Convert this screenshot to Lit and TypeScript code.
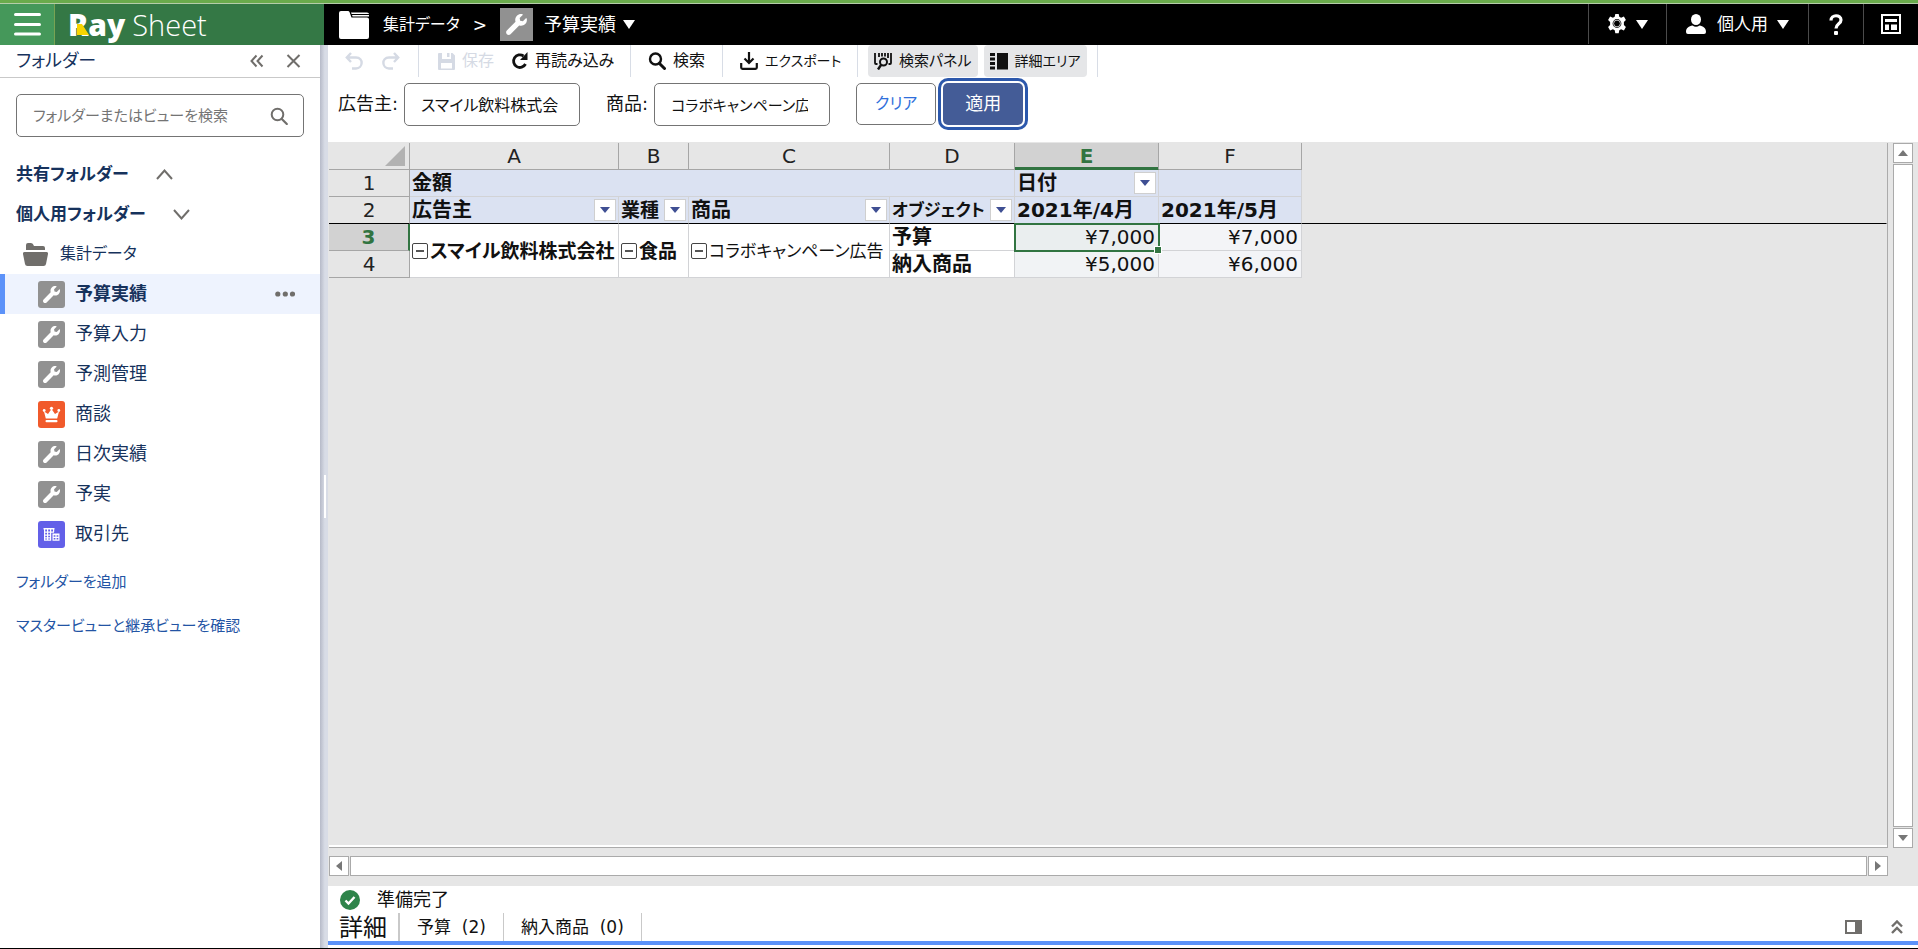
import { LitElement, html, css, svg, nothing } from "lit";
import { customElement, state } from "lit/decorators.js";
import { classMap } from "lit/directives/class-map.js";

const wrench = svg`<svg viewBox="-150 -150 812 812" aria-hidden="true"><path fill="#fff" d="M507.730 109.100c-2.240-9.030-13.540-12.090-20.120-5.510l-74.360 74.360-67.880-11.310-11.310-67.880 74.360-74.360c6.620-6.620 3.430-17.900-5.660-20.160-47.380-11.740-99.550.91-136.580 37.930-39.640 39.640-50.550 97.100-34.050 147.200L18.740 402.760c-24.990 24.990-24.990 65.510 0 90.500 24.990 24.990 65.510 24.990 90.500 0l213.210-213.210c50.120 16.710 107.470 5.680 147.370-34.220 37.070-37.070 49.700-89.320 37.910-136.730z"/></svg>`;
const crown = svg`<svg viewBox="0 0 27 27" aria-hidden="true" fill="#fff"><path d="M6 10.500 7.800 17.500h11.400l1.800-7-4 2.400-3.500-5-3.500 5z"/><circle cx="6.200" cy="9.500" r="1.400"/><circle cx="13.500" cy="7.300" r="1.600"/><circle cx="20.800" cy="9.500" r="1.400"/><rect x="7.500" y="18.900" width="12" height="2.300" rx="1"/></svg>`;
const building = svg`<svg viewBox="0 0 27 27" aria-hidden="true" fill="#fff"><path d="M5.500 7h11v1.500h-11zM6 7h1.200v12.500H6zM9 7h1.200v12.500H9zM12 7h1.200v12.500H12zM15 7h1.200v4H15zM6 10.500h10v1.200H6zM6 13.500h7v1.200H6zM6 16.300h7v1.200H6zM6 18.500h7.200v1.200H6z"/><path fill-rule="evenodd" d="M14.500 12.500h7v7.200h-7zM15.700 14.200v1.600h1.700v-1.600zM18.600 14.200v1.600h1.700v-1.600zM15.700 17v1.600h1.700V17zM18.600 17v1.600h1.700V17z"/></svg>`;
const caret = svg`<svg class="caret" viewBox="0 0 12 9" aria-hidden="true"><path d="M0 0h12L6 9z" fill="currentColor"/></svg>`;

type View = { name: string; kind: string; };

@customElement("app-root")
export class AppRoot extends LitElement {
  static styles = css`
    :host { display: flex; flex-direction: column; min-height: 100vh; box-sizing: border-box; border-top: 3px solid #6aab4c; border-bottom: 1px solid #000; background: #fff; color: #111; font: 17px/24px "DejaVu Sans", "Noto Sans CJK JP", sans-serif; font-feature-settings: "palt"; }
    * { box-sizing: border-box; }
    button, input { font: inherit; font-feature-settings: inherit; color: inherit; }
    button { display: flex; align-items: center; justify-content: center; flex: none; margin: 0; padding: 0; border: 0; background: none; white-space: nowrap; }
    svg { display: block; flex: none; }
    a { text-decoration: none; }
    .caret { width: 12px; height: 9px; }
    .tile { display: block; flex: none; width: 27px; height: 27px; border-radius: 3px; background: #919191; }
    .tile.deal { background: #f15a2b; }
    .tile.account { background: #6360e8; }

    .topbar { display: flex; height: 42px; border-top: 1px solid #b5cda9; background: #000; color: #fff; }
    .brand { display: flex; width: 324px; background: #347845; }
    .menu { width: 55px; border-right: 1px solid #78a353; background: #45985a; }
    .logo { position: relative; display: flex; align-items: center; margin-left: 13px; }
    .logo b { font: 800 30px/40px "Open Sans", sans-serif; }
    .logo span { margin-left: 7px; font: 300 29px/40px "Open Sans", sans-serif; }
    .leg { position: absolute; left: 9px; top: 19px; width: 13px; height: 13px; }
    .crumbs { display: flex; flex: 1; align-items: center; padding-left: 15px; }
    .crumbs .where { margin-left: 14px; font-size: 16px; }
    .crumbs .gt { margin: 0 13px; }
    .crumbs .tile { width: 33px; height: 33px; border-radius: 0; }
    .crumbs button { gap: 7px; margin-left: 11px; font-size: 18px; }
    .tools { display: flex; height: 40px; }
    .tools button { gap: 9px; border-left: 1px solid #4b4b4b; }
    .t1 { width: 78px; } .t2 { width: 142px; } .t3 { width: 55px; } .t4 { width: 55px; }
    .t2 svg:first-child { margin-right: 2px; }

    .body { display: flex; flex: 1; min-height: 0; }
    .side { width: 320px; flex: none; color: #16325c; }
    .sidehead { display: flex; align-items: center; height: 33px; padding: 0 19px 0 16px; border-bottom: 1px solid #c9c9c9; }
    .sidehead h2 { flex: 1; margin: 0; font-size: 18px; font-weight: 400; }
    .sidehead button { margin-left: 22px; color: #706e6b; }
    .find { display: flex; align-items: center; height: 43px; margin: 16px 16px 17px; padding: 0 15px 0 16px; border: 1px solid #747474; border-radius: 5px; color: #706e6b; font-size: 15px; }
    .find input { flex: 1; min-width: 0; border: 0; outline: 0; padding: 0; background: none; }
    .find input::placeholder { color: #747474; opacity: 1; }
    .group { gap: 27px; height: 40px; margin-left: 16px; font-weight: 700; color: #16325c; }
    .tree { list-style: none; margin: 0; padding: 0; }
    .folder { gap: 12px; height: 40px; margin-left: 23px; font-size: 16px; color: #16325c; }
    .row { display: flex; align-items: center; height: 40px; padding: 0 25px 0 38px; }
    .row a { display: flex; flex: 1; align-items: center; gap: 10px; color: #16325c; font-size: 18px; }
    .row.on { padding-left: 33px; border-left: 5px solid #5c92f9; background: #eef3fe; font-weight: 700; }
    .side .links { display: flex; flex-direction: column; gap: 20px; margin: 16px; }
    .links a { color: #2354a4; font-size: 15px; }
    .split { display: flex; align-items: center; justify-content: center; width: 8px; flex: none; background: linear-gradient(90deg, #b6bac8, #d8dce6 60%); }
    .split i { width: 2px; height: 43px; background: #fff; margin-left: 2px; }
    .main { display: flex; flex: 1; flex-direction: column; min-width: 0; }

    .toolbar { display: flex; height: 32px; font-size: 16px; }
    .toolbar > div { display: flex; border-right: 1px solid #d8dde6; }
    .toolbar button { gap: 7px; }
    .toolbar button:disabled { color: #d5dae4; }
    .g1 { width: 91px; padding-left: 17px; gap: 19px; }
    .g2 { width: 212px; padding-left: 19px; gap: 17px; }
    .g3 { width: 92px; padding-left: 17px; }
    .g4 { width: 135px; padding-left: 17px; font-size: 14px; }
    .g5 { padding: 0 10px; gap: 6px; font-size: 15px; }
    .toolbar .g5 button { padding: 0 6px; border-radius: 4px; background: #e5e6e8; }
    .toolbar .g5 button + button { font-size: 14px; }
    .filters { display: flex; align-items: center; height: 54px; margin-bottom: 11px; padding-left: 10px; font-size: 18px; }
    .filters label { display: flex; align-items: center; gap: 6px; margin-right: 26px; }
    .filters input { width: 176px; height: 43px; padding: 0 21px 0 16px; border: 1px solid #747474; border-radius: 5px; background: #fff; font-size: 16px; }
    .filters .item { font-size: 15px; }
    .filters button { width: 80px; height: 42px; border-radius: 5px; }
    .filters .clear { border: 1px solid #747474; color: #2f6fdb; font-size: 16px; }
    .filters .apply { margin-left: 7px; background: #445c97; color: #fff; box-shadow: 0 0 0 2px #fff, 0 0 0 5px #2c58ac; }

    .sheet { display: grid; flex: 1; grid-template-columns: minmax(0, 1fr) 20px; grid-template-rows: minmax(0, 1fr) 20px; column-gap: 5px; row-gap: 8px; padding: 1px 5px 10px 1px; background: #e6e6e6; }
    .canvas { border-right: 1px solid #ababab; border-bottom: 1px solid #ababab; box-shadow: inset 0 -2px #fff; }
    table { width: 100%; border-collapse: separate; border-spacing: 0; table-layout: fixed; font-size: 20px; line-height: 26px; }
    th, td { height: 27px; padding: 0 2px; border-right: 1px solid #d2d3d6; border-bottom: 1px solid #d2d3d6; text-align: left; white-space: nowrap; font-weight: 400; background: #fff; }
    .cols th, th.num { text-align: center; background: #e6e6e6; border-color: #a6a6a6; color: #222; }
    .cols th:first-child svg { margin: 0 2px 0 auto; }
    .cols th.hot { background: #d2d2d2; color: #317441; font-weight: 700; box-shadow: inset 0 -2px #317441; border-bottom-color: #317441; }
    th.num.hot { background: #d2d2d2; color: #317441; font-weight: 700; border-right: 2px solid #317441; }
    .head td { background: #dbe2f2; font-weight: 700; }
    tr td.rest { border-color: transparent; background: none; }
    tr.rule td, tr.rule th { border-bottom-color: #000; }
    .stub { display: flex; align-items: center; justify-content: space-between; }
    .stub button { width: 22px; height: 22px; border: 1px solid #cfcfcf; background: #fff; }
    td.strong { font-weight: 700; }
    .small { font-size: 17px; }
    .medium { font-size: 19px; }
    .expand { display: flex; align-items: center; gap: 2px; }
    .expand button { width: 16px; height: 16px; border: 1px solid #444; border-radius: 2px; }
    .expand button::before { content: ""; width: 8px; height: 2px; background: #555; }
    td.money { text-align: right; background: #f3f4f7; padding-right: 3px; }
    td.sel { position: relative; background: #eaeeef; outline: 2px solid #317441; outline-offset: -1px; }
    td.sel::after { content: ""; position: absolute; right: -3px; bottom: -3px; width: 6px; height: 6px; background: #317441; outline: 1px solid #fff; }
    td.tint { background: #f1f3f5; }
    .bar { display: flex; gap: 1px; color: #777; }
    .bar.v { flex-direction: column; }
    .bar button { width: 20px; height: 20px; border: 1px solid #aaa; background: #fff; }
    .bar i { flex: 1; border: 1px solid #aaa; background: #fff; }

    .status { display: flex; align-items: center; gap: 17px; height: 27px; padding-left: 12px; font-size: 18px; }
    .tabs { display: flex; height: 28px; }
    .tabs strong { padding: 0 11px; border-right: 2px solid #c9c9c9; font-size: 24px; font-weight: 400; line-height: 30px; }
    .tabs .tab { padding: 0 17px; border-right: 1px solid #c9c9c9; white-space: pre; }
    .tabs .end { display: flex; gap: 29px; margin: 0 15px 0 auto; color: #706e6b; }
    .foot { height: 7px; border-top: 4px solid #5c92f9; background: #fff; }
  `;

  @state() private views: View[] = [
    { name: "予算実績", kind: "tool" },
    { name: "予算入力", kind: "tool" },
    { name: "予測管理", kind: "tool" },
    { name: "商談", kind: "deal" },
    { name: "日次実績", kind: "tool" },
    { name: "予実", kind: "tool" },
    { name: "取引先", kind: "account" },
  ];
  @state() private current = "予算実績";

  private tile(kind: string) {
    const glyph = kind === "deal" ? crown : kind === "account" ? building : wrench;
    return html`<span class=${classMap({ tile: true, [kind]: true })}>${glyph}</span>`;
  }

  private filterCell(text: string, size = "") {
    return html`<div class="stub"><span class=${size}>${text}</span><button aria-label=${text + " フィルター"}><svg width="10" height="6" viewBox="0 0 10 6"><path d="M0 0h10L5 6z" fill="#3f4f93"/></svg></button></div>`;
  }

  private group(text: string, size = "") {
    return html`<div class="expand"><button aria-label=${text + " を折りたたむ"}></button><span class=${size}>${text}</span></div>`;
  }

  private header() {
    return html`<header class="topbar">
      <div class="brand">
        <button class="menu" aria-label="メニュー"><svg width="27" height="23" viewBox="0 0 27 23" stroke="#fff" stroke-width="3" stroke-linecap="round"><path d="M1.500 1.500h24M1.500 11.500h24M1.500 21h24"/></svg></button>
        <div class="logo"><b>Ray</b><span>Sheet</span><svg class="leg" viewBox="0 0 13 13"><path d="M0 1h5l7 11H0z" fill="#f8d500"/></svg></div>
      </div>
      <nav class="crumbs">
        <svg width="30" height="28" viewBox="0 0 30 28"><path d="M2 0h7q1 0 1.500 1l2 5.500H28a2 2 0 0 1 2 2V26a2 2 0 0 1-2 2H2a2 2 0 0 1-2-2V2a2 2 0 0 1 2-2zM12 1.500h16q2 0 2 1.500H12.600zM13 4h17v1.500H13.600z" fill="#fff"/></svg>
        <span class="where">集計データ</span><span class="gt">&gt;</span>${this.tile("tool")}
        <button>${this.current}${caret}</button>
      </nav>
      <div class="tools">
        <button class="t1" aria-label="設定"><svg width="20" height="20" viewBox="0 0 20 20"><path fill="#fff" fill-rule="evenodd" d="M8.300 0h3.400l.6 2.800 1.800 1 2.800-1.200 2 3.400-2 2v3l2 2-2 3.400-2.800-1.200-1.800 1-.6 3H8.300l-.6-3-1.800-1-2.800 1.200-2-3.400 2-2V8l-2-2 2-3.400 2.800 1.200 1.800-1zM10 5.100a4.400 4.400 0 1 0 0 8.800A4.400 4.400 0 0 0 10 5.100z"/><circle cx="10" cy="9.500" r="3.400" fill="none" stroke="#fff" stroke-width=".8"/></svg>${caret}</button>
        <button class="t2"><svg width="20" height="20" viewBox="0 0 20 20" fill="#fff"><ellipse cx="10" cy="5.500" rx="5" ry="5.500"/><path d="M0 18c0-4 3-6 6.500-6.500a6 6 0 0 0 7 0C17 12 20 14 20 18q0 2-2 2H2q-2 0-2-2z"/></svg>個人用${caret}</button>
        <button class="t3" aria-label="ヘルプ"><svg width="14" height="21" viewBox="0 0 14 21"><path d="M2 6.500C2 0 12 0.500 12 6c0 4-5 3.500-5 8.500" fill="none" stroke="#fff" stroke-width="3.200"/><rect x="5" y="17" width="4" height="4" rx="1" fill="#fff"/></svg></button>
        <button class="t4" aria-label="レイアウト"><svg width="20" height="20" viewBox="0 0 20 20"><rect x="1" y="1" width="18" height="18" fill="none" stroke="#fff" stroke-width="2"/><path d="M4 5h12v3H4zM4 10.500h4V16H4zM10 10.500h6V16h-6z" fill="#fff"/></svg></button>
      </div>
    </header>`;
  }

  private sidebar() {
    return html`<aside class="side">
      <div class="sidehead"><h2>フォルダー</h2>
        <button aria-label="折りたたむ"><svg width="14" height="14" viewBox="0 0 14 14" fill="none" stroke="currentColor" stroke-width="2"><path d="M6.500 1.500 1.500 7l5 5.500M12.500 1.500 7.500 7l5 5.500"/></svg></button>
        <button aria-label="閉じる"><svg width="15" height="14" viewBox="0 0 15 14" stroke="currentColor" stroke-width="2"><path d="m1.500 1 12 12M13.500 1l-12 12"/></svg></button></div>
      <label class="find"><input type="text" placeholder="フォルダーまたはビューを検索" aria-label="フォルダーまたはビューを検索"><svg width="18" height="18" viewBox="0 0 18 18" fill="none" stroke="currentColor"><circle cx="7.500" cy="7.500" r="5.800" stroke-width="2"/><path d="m11.800 12 5 5" stroke-width="2.200" stroke-linecap="round"/></svg></label>
      <button class="group">共有フォルダー<svg width="17" height="11" viewBox="0 0 17 11" fill="none" stroke="#706e6b" stroke-width="2"><path d="m1 10 7.500-8.500L16 10"/></svg></button>
      <button class="group">個人用フォルダー<svg width="17" height="11" viewBox="0 0 17 11" fill="none" stroke="#706e6b" stroke-width="2"><path d="m1 1 7.500 8.500L16 1"/></svg></button>
      <button class="folder"><svg width="25" height="23" viewBox="0 0 25 23" fill="#706e6b"><path d="M3 7V2q0-2 2-2h3q2 0 3 3h9q2 0 2 2v2z"/><path d="M1.500 9h22q1.700 0 1.500 2l-2 10q-.3 2-2.500 2h-16q-2.200 0-2.500-2L0 11q-.2-2 1.500-2z"/></svg>集計データ</button>
      <ul class="tree">${this.views.map((v) => html`<li class=${classMap({ row: true, on: v.name === this.current })}>
        <a href="#" @click=${(e: Event) => { e.preventDefault(); this.current = v.name; }}>${this.tile(v.kind)}${v.name}</a>
        ${v.name === this.current ? html`<button aria-label="その他"><svg width="20" height="6" viewBox="0 0 20 6" fill="#706e6b"><circle cx="2.800" cy="3" r="2.600"/><circle cx="10.300" cy="3" r="2.600"/><circle cx="17.500" cy="3" r="2.600"/></svg></button>` : nothing}</li>`)}</ul>
      <div class="links"><a href="#">フォルダーを追加</a><a href="#">マスタービューと継承ビューを確認</a></div>
    </aside>`;
  }

  private toolbar() {
    return html`<div class="toolbar">
      <div class="g1"><button disabled aria-label="元に戻す"><svg width="18" height="18" viewBox="0 0 18 18" fill="none" stroke="currentColor" stroke-width="2.400"><path d="M6 1 1.800 5.500 6 10M2 5.500h9c8 0 7 11 0 11H7"/></svg></button>
        <button disabled aria-label="やり直し"><svg width="18" height="18" viewBox="0 0 18 18" fill="none" stroke="currentColor" stroke-width="2.400"><path d="M12 1l4.200 4.500L12 10M16 5.500H7c-8 0-7 11 0 11h4"/></svg></button></div>
      <div class="g2"><button disabled><svg width="17" height="17" viewBox="0 0 17 17" fill="currentColor" fill-rule="evenodd"><path d="M1 0h3v6h9V0h1.500L17 2.500V16q0 1-1 1H1q-1 0-1-1V1q0-1 1-1zM3 10v5.500h11V10z"/><path d="M9 0h2.500v4H9z"/></svg>保存</button>
        <button><svg width="17" height="18" viewBox="0 0 17 18"><path d="M14.500 12A6.300 6.300 0 1 1 12.500 4" fill="none" stroke="currentColor" stroke-width="2.800"/><path d="M16.500 0v8H9z" fill="currentColor"/></svg>再読み込み</button></div>
      <div class="g3"><button><svg width="18" height="18" viewBox="0 0 18 18" fill="none" stroke="currentColor"><circle cx="7.500" cy="7" r="5.500" stroke-width="2.400"/><path d="m11.500 11.500 5 5" stroke-width="3" stroke-linecap="round"/></svg>検索</button></div>
      <div class="g4"><button><svg width="18" height="18" viewBox="0 0 18 18" fill="none" stroke="currentColor" stroke-width="2.200"><path d="M9 0v10M4.500 6.500 9 11l4.500-4.500M1.200 11v4.500q0 1.300 1.300 1.300h13q1.300 0 1.300-1.300V11"/></svg>エクスポート</button></div>
      <div class="g5"><button><svg width="18" height="17" viewBox="0 0 18 17" fill="none" stroke="currentColor" stroke-width="1.800"><path d="M1 0v10q0 1 1 1h1.500M5 0v4M8 0v3.500M11 0v3.500M14 0v5M17 0v10q0 1-1 1h-1.500"/><circle cx="9.500" cy="9" r="3.500" stroke-width="2"/><path d="m7 12-3 4.500" stroke-width="2.400"/></svg>検索パネル</button>
        <button><svg width="18" height="17" viewBox="0 0 18 17" fill="currentColor"><path d="M0 0h5v3H0zM0 4.500h5v3H0zM0 9h5v3H0zM0 13.500h5v3H0zM7 0h11v16.500H7z"/></svg>詳細エリア</button></div>
    </div>`;
  }

  private table() {
    const rest = html`<td class="rest"></td>`;
    return html`<table>
      <colgroup><col style="width:81px"><col style="width:209px"><col style="width:70px"><col style="width:201px"><col style="width:125px"><col style="width:144px"><col style="width:143px"><col></colgroup>
      <thead><tr class="cols"><th><svg width="20" height="20" viewBox="0 0 20 20"><path d="M20 0v20H0z" fill="#b2b2b2"/></svg></th>${["A", "B", "C", "D", "E", "F"].map((c) => html`<th class=${classMap({ hot: c === "E" })}>${c}</th>`)}${rest}</tr></thead>
      <tbody>
        <tr class="head"><th class="num">1</th><td colspan="4">金額</td><td>${this.filterCell("日付")}</td><td></td>${rest}</tr>
        <tr class="head rule"><th class="num">2</th><td>${this.filterCell("広告主")}</td><td>${this.filterCell("業種", "medium")}</td><td>${this.filterCell("商品")}</td><td>${this.filterCell("オブジェクト", "small")}</td><td>2021年/4月</td><td>2021年/5月</td>${rest}</tr>
        <tr><th class="num hot">3</th><td class="strong" rowspan="2">${this.group("スマイル飲料株式会社", "medium")}</td><td class="strong" rowspan="2">${this.group("食品", "medium")}</td><td rowspan="2">${this.group("コラボキャンペーン広告", "small")}</td><td class="strong">予算</td><td class="money sel">¥7,000</td><td class="money">¥7,000</td>${rest}</tr>
        <tr><th class="num">4</th><td class="strong">納入商品</td><td class="money tint">¥5,000</td><td class="money">¥6,000</td>${rest}</tr>
      </tbody></table>`;
  }

  render() {
    return html`${this.header()}
      <div class="body">${this.sidebar()}<div class="split"><i></i></div>
        <main class="main">${this.toolbar()}
          <form class="filters" @submit=${(e: Event) => e.preventDefault()}>
            <label>広告主:<input type="text" value="スマイル飲料株式会社"></label>
            <label>商品:<input class="item" type="text" value="コラボキャンペーン広告"></label>
            <button type="button" class="clear">クリア</button><button class="apply">適用</button>
          </form>
          <section class="sheet">
            <div class="canvas">${this.table()}</div>
            <div class="bar v"><button aria-label="上"><svg width="10" height="6" viewBox="0 0 10 6"><path d="M5 0l5 6H0z" fill="currentColor"/></svg></button><i></i><button aria-label="下"><svg width="10" height="6" viewBox="0 0 10 6"><path d="M0 0h10L5 6z" fill="currentColor"/></svg></button></div>
            <div class="bar"><button aria-label="左"><svg width="6" height="10" viewBox="0 0 6 10"><path d="M6 0v10L0 5z" fill="currentColor"/></svg></button><i></i><button aria-label="右"><svg width="6" height="10" viewBox="0 0 6 10"><path d="M0 0l6 5-6 5z" fill="currentColor"/></svg></button></div>
          </section>
          <div class="status"><svg width="20" height="20" viewBox="0 0 20 20"><circle cx="10" cy="10" r="10" fill="#2e844a"/><path d="m5.500 10.500 3 3 6-6.500" fill="none" stroke="#fff" stroke-width="2.400"/></svg>準備完了</div>
          <div class="tabs"><strong>詳細</strong><button class="tab">予算  (2)</button><button class="tab">納入商品  (0)</button>
            <div class="end"><button aria-label="パネル"><svg width="17" height="14" viewBox="0 0 17 14"><path d="M1 1h15v12H1z" fill="none" stroke="currentColor" stroke-width="2"/><path d="M10 2h5v10h-5z" fill="currentColor"/></svg></button>
              <button aria-label="展開"><svg width="12" height="14" viewBox="0 0 12 14" fill="none" stroke="currentColor" stroke-width="2.400"><path d="m1 6.500 5-5 5 5M1 13l5-5 5 5"/></svg></button></div></div>
          <div class="foot"></div>
        </main>
      </div>`;
  }
}
